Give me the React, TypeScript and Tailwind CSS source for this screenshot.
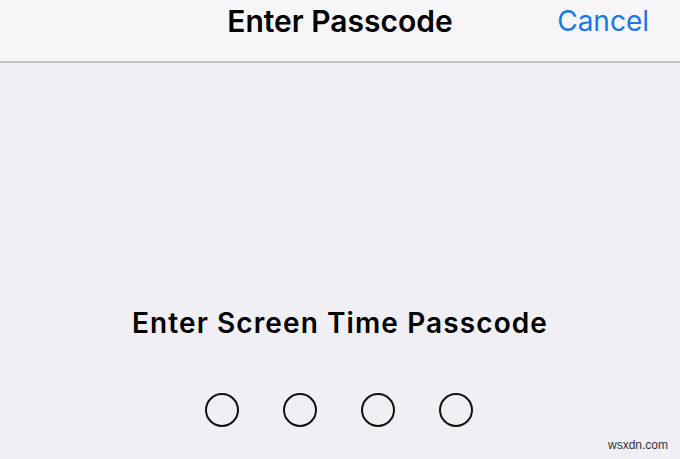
import React from 'react';

const PasscodeDots: React.FC<{ count: number }> = ({ count }) => (
  <div className="flex gap-[44px] -ml-[2px]">
    {Array.from({ length: count }).map((_, i) => (
      <div key={i} className="w-[34px] h-[34px] rounded-full border-2 border-[#111]" />
    ))}
  </div>
);

export default function App() {
  return (
    <div className="w-[680px] h-[459px] bg-[#efeff4] flex flex-col overflow-hidden font-['Inter',sans-serif]">
      {/* Nav bar */}
      <div className="relative h-[63px] bg-[#f6f6f8] border-b-2 border-[#c4c4c8] flex justify-center shrink-0">
        <h1 className="pt-[6px] text-[30px] leading-none font-semibold text-black">Enter Passcode</h1>
        <button className="absolute right-[31px] top-[7px] text-[28px] leading-none text-[#1a78e6]">Cancel</button>
      </div>

      {/* Body */}
      <div className="flex-1 flex flex-col items-center relative">
        <p className="mt-[246px] text-[28px] leading-none font-semibold text-black tracking-[1.1px]">
          Enter Screen Time Passcode
        </p>
        <div className="mt-[56px]">
          <PasscodeDots count={4} />
        </div>
        <span className="absolute right-[12px] bottom-[5px] text-[12px] text-[#333] font-['Liberation_Sans',sans-serif]">
          wsxdn.com
        </span>
      </div>
    </div>
  );
}
